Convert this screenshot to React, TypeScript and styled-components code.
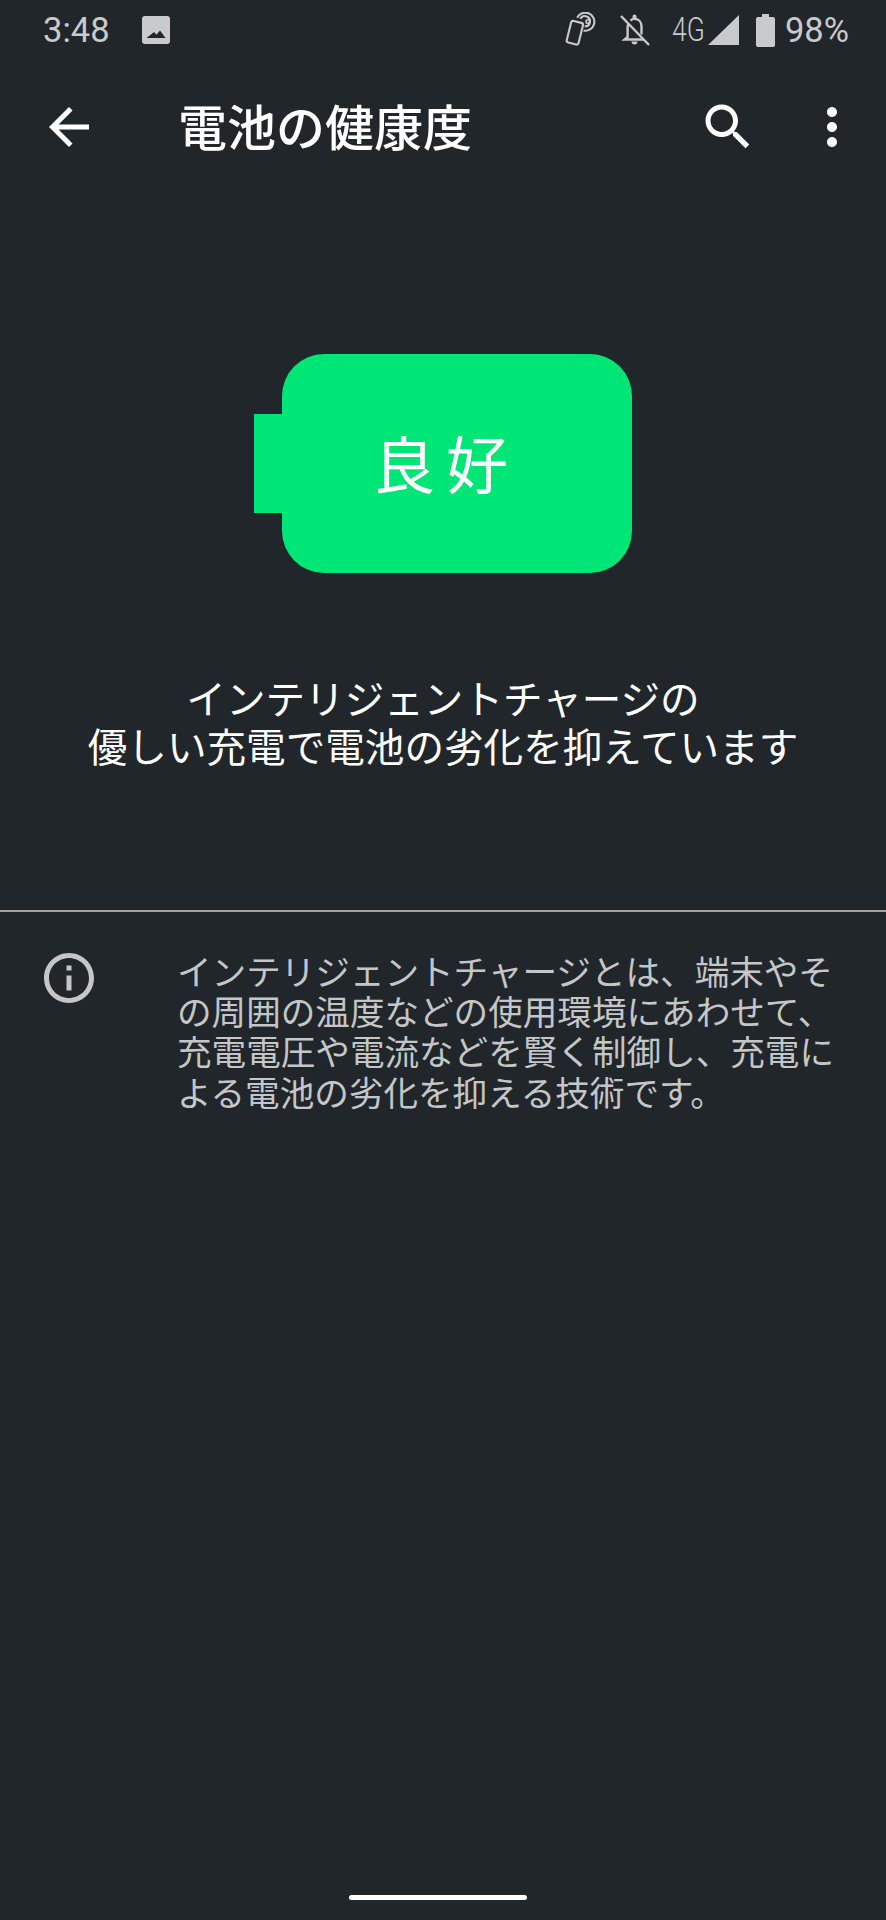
import styled, { createGlobalStyle } from "styled-components"

const GlobalStyle = createGlobalStyle`
  html, body {
    margin: 0;
    padding: 0;
    background: #21262a;
  }
`

const Screen = styled.div`
  width: 886px;
  height: 1920px;
  display: flex;
  flex-direction: column;
  background: #21262a;
  font-family: "Noto Sans CJK JP", "Noto Sans", sans-serif;
  overflow: hidden;
`

const StatusBar = styled.div`
  height: 60px;
  display: flex;
  align-items: center;
  padding: 0 37px 0 43px;
  color: #c8cacb;
`

const StatusText = styled.span`
  font-family: Roboto, sans-serif;
  font-size: 34.5px;
  font-weight: 450;
  line-height: 60px;
`

const Spacer = styled.div`
  flex: 1;
`

const StatusIcon = styled.svg<{ $left?: number }>`
  display: block;
  margin-left: ${(p) => p.$left ?? 0}px;
  fill: currentColor;
  flex: none;
`

const NetworkLabel = styled.span`
  display: inline-block;
  width: 31px;
  margin-left: 22px;
  font-family: Roboto, sans-serif;
  font-size: 33px;
  font-weight: 300;
  line-height: 60px;
  transform: scaleX(0.8);
  transform-origin: left center;
  white-space: nowrap;
`

const Percent = styled(StatusText)`
  margin-left: 10px;
`

const AppBar = styled.div`
  height: 60px;
  margin-top: 37px;
  display: flex;
  align-items: center;
  padding: 0 24px 0 39px;
  color: #fff;
`

const Title = styled.h1`
  margin: 0 0 4px 79px;
  font-size: 49px;
  font-weight: 500;
  line-height: 60px;
  color: #fff;
  white-space: nowrap;
`

const BarIcon = styled.svg<{ $left?: number }>`
  display: block;
  width: 60px;
  height: 60px;
  flex: none;
  fill: currentColor;
  margin-left: ${(p) => p.$left ?? 0}px;
`

const Hero = styled.section`
  display: flex;
  flex-direction: column;
  align-items: center;
  padding-top: 197px;
`

const Battery = styled.div`
  display: flex;
  align-items: center;
`

const BatteryNub = styled.div`
  width: 28px;
  height: 99px;
  background: #00e676;
`

const BatteryBody = styled.div`
  box-sizing: border-box;
  width: 350px;
  height: 219px;
  padding: 0 22px 3px 0;
  border-radius: 42px;
  background: #00e676;
  display: flex;
  align-items: center;
  justify-content: center;
  color: #fff;
  font-size: 62px;
  letter-spacing: 11px;
  line-height: 1;
`

const HealthText = styled.p`
  margin: 100px 0 0;
  color: #fff;
  font-size: 39.6px;
  line-height: 48px;
  text-align: center;
  white-space: nowrap;
`

const Divider = styled.hr`
  height: 2px;
  margin: 141px 0 0;
  border: 0;
  background: #a1a3a5;
`

const InfoRow = styled.section`
  display: flex;
  padding: 36px 0 0 39px;
  color: #c4c6c8;
`

const InfoIcon = styled.svg`
  display: block;
  width: 60px;
  height: 60px;
  flex: none;
  fill: currentColor;
`

const InfoText = styled.p`
  margin: 2px 0 0 78px;
  font-size: 34.6px;
  line-height: 40.2px;
  white-space: nowrap;
`

const HomeBar = styled.div`
  width: 178px;
  height: 5px;
  margin: auto 0 20px 349px;
  border-radius: 3px;
  background: #fff;
`

const App = () => {
  return (
    <Screen>
      <GlobalStyle />
      <StatusBar>
        <StatusText>3:48</StatusText>
        <StatusIcon $left={32} width="28" height="28" viewBox="0 0 28 28">
          <path d="M3 0h22a3 3 0 0 1 3 3v22a3 3 0 0 1-3 3H3a3 3 0 0 1-3-3V3a3 3 0 0 1 3-3zM4.500 22h19l-5.500-7.500-3.600 4.200-2.300-2.700z" fillRule="evenodd" />
        </StatusIcon>
        <Spacer />
        <StatusIcon width="36" height="36" viewBox="0 0 34 34">
          <g stroke="currentColor" fill="none">
            <rect x="4.500" y="9" width="11.500" height="21" rx="2" strokeWidth="2" transform="rotate(14 10 19.500)" />
            <path d="M18.500 17.500a8.500 8.500 0 1 0-6-12" strokeWidth="2" />
            <path d="M19.500 13.500a4.800 4.800 0 1 0-4-7" strokeWidth="2" />
            <circle cx="22.500" cy="9" r="1.700" strokeWidth="1.600" />
          </g>
        </StatusIcon>
        <StatusIcon $left={19} width="31" height="32" viewBox="0 0 31 32">
          <g fill="none" stroke="currentColor" strokeWidth="2.400">
            <path d="M2 2l28 29" />
            <path d="M9.500 9.500c-.6 1.200-.9 2.500-.9 4v9.500l-3 2.500h19" />
            <path d="M11.500 6.500c1.100-1 2.400-1.600 4-1.600 4 0 7 3 7 7.500v8" />
          </g>
          <path d="M13.500 4V2.500a2 2 0 0 1 4 0V4zM12.500 27.500h6a3 3 0 0 1-6 0z" />
        </StatusIcon>
        <NetworkLabel>4G</NetworkLabel>
        <StatusIcon $left={5} width="31" height="30" viewBox="0 0 31 30">
          <path d="M31 0v30H0z" />
        </StatusIcon>
        <StatusIcon $left={17} width="19" height="33" viewBox="0 0 19 33">
          <path d="M6 0h7v3h4a2 2 0 0 1 2 2v26a2 2 0 0 1-2 2H2a2 2 0 0 1-2-2V5a2 2 0 0 1 2-2h4z" />
        </StatusIcon>
        <Percent>98%</Percent>
      </StatusBar>

      <AppBar>
        <BarIcon viewBox="0 0 24 24">
          <path d="M20 11H7.830l5.590-5.590L12 4l-8 8 8 8 1.410-1.410L7.830 13H20v-2z" />
        </BarIcon>
        <Title>電池の健康度</Title>
        <Spacer />
        <BarIcon viewBox="0 0 24 24">
          <path d="M15.500 14h-.79l-.28-.27C15.410 12.590 16 11.110 16 9.500 16 5.910 13.090 3 9.500 3S3 5.910 3 9.500 5.910 16 9.500 16c1.610 0 3.090-.59 4.230-1.570l.27.28v.79l5 4.990L20.490 19l-4.990-5zm-6 0C7.010 14 5 11.990 5 9.500S7.010 5 9.500 5 14 7.010 14 9.500 11.990 14 9.500 14z" />
        </BarIcon>
        <BarIcon $left={44} viewBox="0 0 24 24">
          <path d="M12 8c1.100 0 2-.9 2-2s-.9-2-2-2-2 .9-2 2 .9 2 2 2zm0 2c-1.100 0-2 .9-2 2s.9 2 2 2 2-.9 2-2-.9-2-2-2zm0 6c-1.100 0-2 .9-2 2s.9 2 2 2 2-.9 2-2-.9-2-2-2z" />
        </BarIcon>
      </AppBar>

      <Hero>
        <Battery>
          <BatteryNub />
          <BatteryBody>良好</BatteryBody>
        </Battery>
        <HealthText>
          インテリジェントチャージの
          <br />
          優しい充電で電池の劣化を抑えています
        </HealthText>
      </Hero>

      <Divider />

      <InfoRow>
        <InfoIcon viewBox="0 0 24 24">
          <path d="M11 7h2v2h-2zm0 4h2v6h-2zm1-9C6.480 2 2 6.480 2 12s4.480 10 10 10 10-4.480 10-10S17.520 2 12 2zm0 18c-4.410 0-8-3.590-8-8s3.590-8 8-8 8 3.590 8 8-3.590 8-8 8z" />
        </InfoIcon>
        <InfoText>
          インテリジェントチャージとは、端末やそ
          <br />
          の周囲の温度などの使用環境にあわせて、
          <br />
          充電電圧や電流などを賢く制御し、充電に
          <br />
          よる電池の劣化を抑える技術です。
        </InfoText>
      </InfoRow>

      <HomeBar />
    </Screen>
  )
}

export default App
